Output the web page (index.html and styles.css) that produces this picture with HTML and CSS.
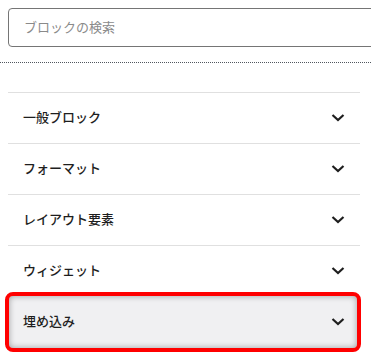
FILE: index.html
```html
<!DOCTYPE html>
<html lang="ja">
<head>
<meta charset="utf-8">
<link rel="stylesheet" href="styles.css">
</head>
<body>
<div class="panel">
  <div class="search">
    <span class="placeholder">ブロックの検索</span>
  </div>
  <div class="dotted"></div>
  <ul class="cats">
    <li class="cat"><span class="label">一般ブロック</span><svg class="chev" viewBox="0 0 24 24" width="24" height="24"><polyline points="6.5,9 12,14 17.5,9" /></svg></li>
    <li class="cat"><span class="label">フォーマット</span><svg class="chev" viewBox="0 0 24 24" width="24" height="24"><polyline points="6.5,9 12,14 17.5,9" /></svg></li>
    <li class="cat"><span class="label">レイアウト要素</span><svg class="chev" viewBox="0 0 24 24" width="24" height="24"><polyline points="6.5,9 12,14 17.5,9" /></svg></li>
    <li class="cat"><span class="label">ウィジェット</span><svg class="chev" viewBox="0 0 24 24" width="24" height="24"><polyline points="6.5,9 12,14 17.5,9" /></svg></li>
    <li class="cat cat-highlight"><span class="label">埋め込み</span><svg class="chev" viewBox="0 0 24 24" width="24" height="24"><polyline points="6.5,9 12,14 17.5,9" /></svg></li>
  </ul>
</div>
</body>
</html>
```

FILE: styles.css
```css
html, body {
  margin: 0;
  padding: 0;
  background: #ffffff;
}
body {
  width: 371px;
  height: 359px;
  overflow: hidden;
  font-family: "Noto Sans CJK JP", "Noto Sans", sans-serif;
  color: #1e1e1e;
}
.panel {
  display: flex;
  flex-direction: column;
}
.search {
  box-sizing: border-box;
  margin: 8px 0 0 8px;
  width: 380px;
  height: 39px;
  border: 1px solid #757575;
  border-radius: 4px;
  display: flex;
  align-items: center;
  padding-left: 15px;
}
.placeholder {
  font-size: 13px;
  color: #8a8a8a;
  line-height: 1;
  margin-top: -2px;
}
.dotted {
  margin-top: 15px;
  border-top: 1px dotted #50575e;
}
.cats {
  list-style: none;
  margin: 29px 11px 0 8px;
  padding: 0;
}
.cat {
  box-sizing: border-box;
  height: 51px;
  border-top: 1px solid #e0e0e0;
  display: flex;
  align-items: center;
  justify-content: space-between;
  padding: 0 10px 0 15px;
  position: relative;
}
.label {
  font-size: 13px;
  font-weight: 500;
  line-height: 1;
  margin-top: -3px;
  position: relative;
  z-index: 1;
}
.chev {
  position: relative;
  z-index: 1;
}
.chev polyline {
  fill: none;
  stroke: #1e1e1e;
  stroke-width: 2.2;
}
.cat-highlight::after {
  content: "";
  position: absolute;
  left: -3px;
  top: -5px;
  width: 356px;
  height: 60px;
  box-sizing: border-box;
  border: 4px solid #ff0000;
  border-radius: 8px;
  background: #f0f0f2;
  box-shadow: inset 0 0 6px rgba(0, 0, 0, 0.35);
  z-index: 0;
}
```
